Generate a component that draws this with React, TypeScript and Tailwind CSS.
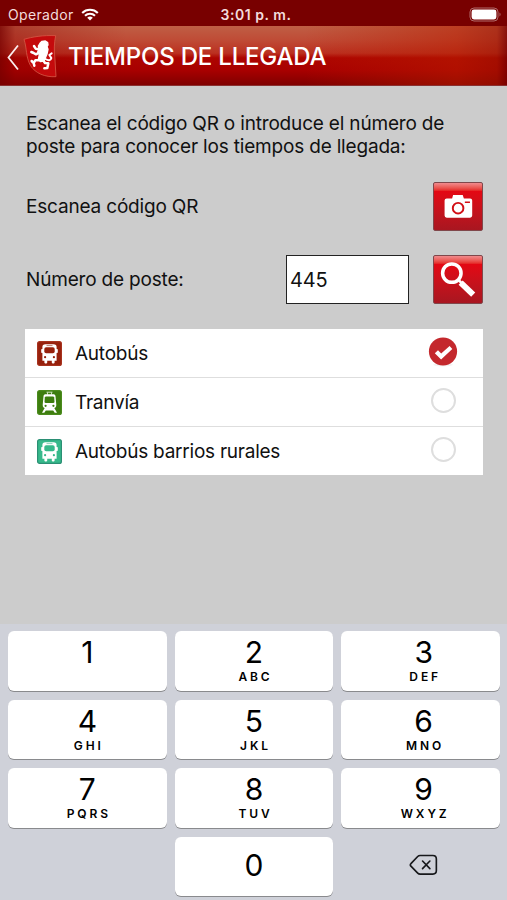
import React, { useState } from 'react';

const KEYS = [
  { digit: '1', letters: '' },
  { digit: '2', letters: 'ABC' },
  { digit: '3', letters: 'DEF' },
  { digit: '4', letters: 'GHI' },
  { digit: '5', letters: 'JKL' },
  { digit: '6', letters: 'MNO' },
  { digit: '7', letters: 'PQRS' },
  { digit: '8', letters: 'TUV' },
  { digit: '9', letters: 'WXYZ' },
];

const MODES = [
  { id: 'bus', label: 'Autobús', color: '#96200c', border: '#a8331f' },
  { id: 'tram', label: 'Tranvía', color: '#3d7d0e', border: '#4b8b1d' },
  { id: 'rural', label: 'Autobús barrios rurales', color: '#37b98b', border: '#2b8f74' },
];

const WifiIcon = () => (
  <svg width="18" height="13" viewBox="0 0 18 13" fill="none" stroke="#fff" strokeWidth="2.1">
    <path d="M1.2 4.9a11.2 11.2 0 0 1 15.6 0" />
    <path d="M4 7.8a7.2 7.2 0 0 1 10 0" />
    <path d="M9 12.6 6.2 9.8a4 4 0 0 1 5.6 0z" fill="#fff" stroke="none" />
  </svg>
);

const BatteryIcon = () => (
  <svg width="33" height="15" viewBox="0 0 33 15" fill="none">
    <rect x="1" y="1" width="28" height="13" rx="4" stroke="#b06a6a" strokeWidth="1" />
    <rect x="2.6" y="2.6" width="24.8" height="9.8" rx="2.4" fill="#fff" />
    <path d="M30.5 5.6c1.4.6 1.4 3.2 0 3.8z" fill="#b06a6a" />
  </svg>
);

const Crest = () => (
  <svg width="34" height="44" viewBox="69 102 102 132">
    <path
      d="M72 118C95 111 130 105 167 107C162 130 162 150 165 180L168 230C135 232 106 220 91 196C77 170 81 145 72 118z"
      fill="#c40a0c"
      stroke="#d65a48"
      strokeWidth="2.4"
    />
    <g fill="#fff" stroke="#fff" strokeLinecap="round" strokeLinejoin="round">
      <path d="M120 130l6-6 10-1 7 5 1 7-3 5 3 8-3 14-5 12-4 9-11 2-6-7 3-14-5-8 4-10-2-8z" strokeWidth="4" />
      <g fill="none" strokeWidth="7.5">
        <path d="M117 148l-10-2-5-8" />
        <path d="M117 158l-9 5-7-4-7-3" />
        <path d="M117 181l-11 0-5 8-6-6M101 189l2 8" />
        <path d="M129 180l6 9 10 1-3 14-9 1" />
      </g>
      <path d="M136 177q15 9 18-3l-6-9 7-5" fill="none" strokeWidth="6" />
    </g>
  </svg>
);

const CameraIcon = () => (
  <svg width="49" height="49" viewBox="0 0 49 49">
    <path d="M13 16.3h5.500l1-3.600h9.800l1.200 3.600h6.300q2.200 0 2.200 2.200v15.300q0 2.200-2.200 2.200H13q-2.200 0-2.200-2.200V18.500q0-2.200 2.200-2.200z" fill="#fff" />
    <circle cx="24.6" cy="26.2" r="5.4" fill="none" stroke="#d20f16" strokeWidth="2" />
    <path d="M31.5 20.2h5.200" stroke="#d20f16" strokeWidth="1.5" />
  </svg>
);

const SearchIcon = () => (
  <svg width="49" height="49" viewBox="0 0 49 49" fill="none" stroke="#fff">
    <circle cx="18.2" cy="18" r="9.4" strokeWidth="3.6" />
    <path d="M25 25l4 4" strokeWidth="2.6" />
    <path d="M27.2 27.6l12.8 12.4" strokeWidth="6" />
  </svg>
);

const BusGlyph = ({ color, border }: { color: string; border: string }) => (
  <svg width="25" height="25" viewBox="0 0 25 25">
    <rect x=".6" y=".6" width="23.8" height="23.8" rx="2" fill={color} stroke={border} strokeWidth="1.2" />
    <path
      d="M8.500 3.200h8c2.300 0 3 .8 3.100 2.600V8l1.200.3v3.500l-1.200.3v7.700h-2v1.600c0 1.500-2.800 1.500-2.800 0v-1.600h-4.600v1.600c0 1.500-2.800 1.500-2.800 0v-1.600h-2v-7.700l-1.200-.3V8.300L5.400 8V5.800c.1-1.800.8-2.600 3.100-2.600z"
      fill="#fff"
    />
    <rect x="7.3" y="6.3" width="10.4" height="6" rx="1.8" fill={color} />
    <path d="M9.500 4.600h6" stroke={color} strokeWidth=".6" />
    <circle cx="8.1" cy="16.200" r="1.100" fill={color} />
    <circle cx="16.900" cy="16.200" r="1.100" fill={color} />
  </svg>
);

const TramGlyph = ({ color, border }: { color: string; border: string }) => (
  <svg width="25" height="25" viewBox="0 0 25 25">
    <rect x=".6" y=".6" width="23.8" height="23.8" rx="2" fill={color} stroke={border} strokeWidth="1.2" />
    <path d="M9.500 2.200h6M10.500 2.200v2.500M14.500 2.200v2.500" stroke="#c6ddb6" strokeWidth="1" fill="none" />
    <path
      d="M9 4.300h7c1.600 0 2.300.6 2.500 2l.8 8.700c0 1.800-.8 2.700-2 3l2.700 4.700h-2.300l-1.500-2.300H8.800l-1.500 2.300H5L7.700 18c-1.200-.3-2-1.200-2-3l.8-8.700c.2-1.400.9-2 2.500-2z"
      fill="#fff"
    />
    <path d="M8.600 6.600h7.800l.8 1 .3 4.700-1 .7H8.500l-1-.7.3-4.700z" fill={color} />
    <circle cx="8.600" cy="15.800" r="1.100" fill={color} />
    <circle cx="16.400" cy="15.800" r="1.100" fill={color} />
  </svg>
);

const CheckMark = () => (
  <svg width="30" height="30" viewBox="0 0 30 30">
    <ellipse cx="15" cy="27.8" rx="10" ry="1.6" fill="#f3f3f3" />
    <circle cx="15" cy="14.5" r="14.1" fill="#c4282d" />
    <path d="M6.800 16.200l3.200-2.900 3.200 3.300 8.400-7.600 2.700 3-11.200 10.500z" fill="#fff" />
  </svg>
);

const BackspaceIcon = () => (
  <svg width="29" height="22" viewBox="0 0 30 22" fill="none" stroke="#17181b" strokeWidth="1.7" strokeLinejoin="round" strokeLinecap="round">
    <path d="M11.500 1.200h13.200q3.600 0 3.600 3.600v12q0 3.600-3.600 3.600H11.500q-1.500 0-2.500-1L2 12.200q-1.300-1.300 0-2.600l7-7.400q1-1 2.500-1z" />
    <path d="M14 6.900l7.600 7.800M21.600 6.900 14 14.700" />
  </svg>
);

const SquareButton = ({ children, label }: { children: React.ReactNode; label: string }) => (
  <button
    aria-label={label}
    className="flex h-[49px] w-[50px] items-center justify-center overflow-hidden rounded-[2px] border border-[#80474b] bg-linear-to-b from-[#f08a8d] via-[#e30713] via-18% to-[#a81620]"
  >
    {children}
  </button>
);

export default function App() {
  const [stop, setStop] = useState('445');
  const [mode, setMode] = useState('bus');

  return (
    <div className="flex h-[900px] w-[507px] flex-col overflow-hidden bg-[#cccccc] font-['Inter',sans-serif] text-[#111111]">
      {/* Status bar */}
      <div className="grid h-[26px] shrink-0 grid-cols-3 items-center bg-[#780000] pt-[2px] pr-[5px] pl-2 text-[14px] text-[#f3dcdc]">
        <div className="flex items-center gap-[7px]">
          <span className="tracking-[0.35px]">Operador</span>
          <WifiIcon />
        </div>
        <span className="pl-[2px] text-center font-semibold tracking-[0.55px]">3:01 p. m.</span>
        <div className="flex justify-end"><BatteryIcon /></div>
      </div>

      {/* Title bar */}
      <header className="flex h-[60px] shrink-0 items-center border-b border-[#8a3030] bg-[linear-gradient(90deg,rgba(120,0,0,0.8)_0,rgba(140,0,0,0.35)_3%,rgba(160,10,0,0)_25%,rgba(180,30,0,0)_60%,rgba(184,30,0,0.5)_90%,rgba(160,20,0,0.6)_98%,rgba(120,0,0,0.8)_100%),linear-gradient(180deg,#bf5f45_0%,#bf4a35_25%,#bb3020_46%,#ad0500_54%,#a80000_75%,#800000_100%)] pl-[7px] text-white">
        <svg width="12" height="27" viewBox="0 0 12 27" fill="none" stroke="#fbeeee" strokeWidth="1.8" className="mt-[3px]">
          <path d="M11 1.500 1.500 13.500 11 25.500" />
        </svg>
        <div className="ml-[4px]"><Crest /></div>
        <h1 className="mt-[2px] ml-[11px] text-[24px] font-medium tracking-[-0.2px]">TIEMPOS DE LLEGADA</h1>
      </header>

      <main className="flex flex-1 flex-col pt-[26px] pr-[24px] pl-[25px] text-[19px] tracking-[-0.18px]">
        <p className="pl-[1px] leading-[23px] whitespace-nowrap">
          Escanea el código QR o introduce el número de
          <br />
          poste para conocer los tiempos de llegada:
        </p>
        <div className="mt-[24px] flex items-center justify-between">
          <span className="pt-[2px] pl-[1px]">Escanea código QR</span>
          <SquareButton label="Escanear"><CameraIcon /></SquareButton>
        </div>
        <div className="mt-[24px] flex items-center">
          <span className="pt-[2px] pl-[1px]">Número de poste:</span>
          <input
            value={stop}
            onChange={e => setStop(e.target.value)}
            className="mr-[24px] ml-auto h-[49px] w-[123px] border border-[#222222] bg-white px-[3px] text-[20px] outline-none"
          />
          <SquareButton label="Buscar"><SearchIcon /></SquareButton>
        </div>

        <div className="mt-[25px] divide-y divide-[#dedede] bg-white">
          {MODES.map(m => (
            <div key={m.id} onClick={() => setMode(m.id)} className="flex h-[49px] items-center pl-[12px] last:h-[48px]">
              {m.id === 'tram' ? <TramGlyph color={m.color} border={m.border} /> : <BusGlyph color={m.color} border={m.border} />}
              <span className="pt-[2px] pl-[13px] tracking-[-0.24px]">{m.label}</span>
              <div className="mr-[25px] ml-auto flex w-[30px] justify-center pb-[3px]">
                {mode === m.id ? <CheckMark /> : <div className="h-[25px] w-[25px] rounded-full border-2 border-[#dedede]" />}
              </div>
            </div>
          ))}
        </div>
      </main>

      {/* Numeric keypad */}
      <div className="grid h-[276px] shrink-0 grid-cols-3 content-start gap-x-[8px] gap-y-[9px] bg-[#cfd1d9] pt-[7px] pr-[7px] pl-[8px] text-black">
        {KEYS.map(k => (
          <button key={k.digit} className="flex h-[59.5px] flex-col items-center rounded-[6px] bg-white pt-[4px] shadow-[0_1px_0_#898a8d] nth-[3n]:pl-[6px]">
            <span className="text-[30px] leading-[34px]">{k.digit}</span>
            <span className="mt-[1px] pl-[3px] text-[12px] leading-[14px] font-semibold tracking-[2.9px]">{k.letters}</span>
          </button>
        ))}
        <div />
        <button className="flex h-[59.5px] items-center justify-center rounded-[6px] bg-white pb-[2px] text-[30px] shadow-[0_1px_0_#898a8d]">0</button>
        <button aria-label="Borrar" className="flex items-center justify-center pb-[3px] pl-[6px]"><BackspaceIcon /></button>
      </div>
    </div>
  );
}
